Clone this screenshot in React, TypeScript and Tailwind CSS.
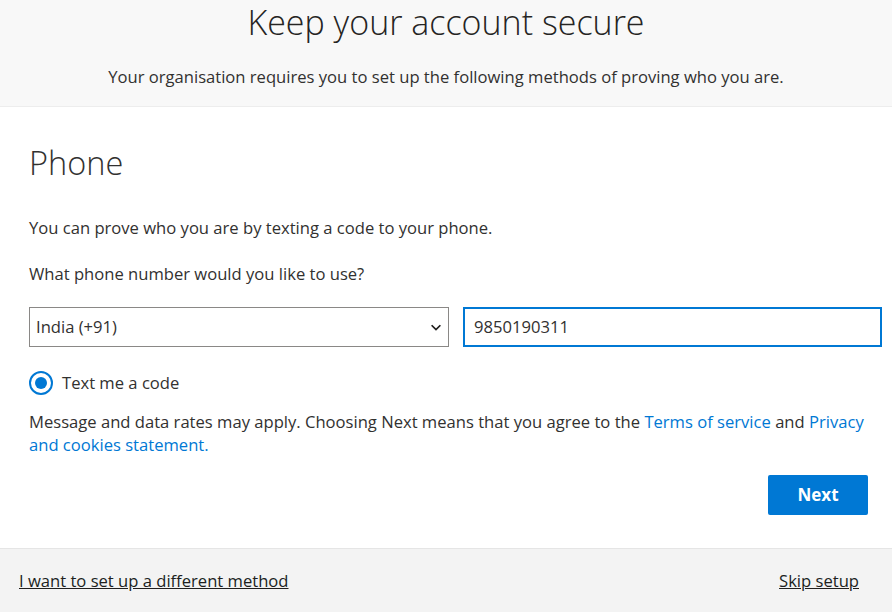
import React from "react";

export default function App() {
  return (
    <div className="w-[892px] h-[612px] flex flex-col bg-white text-[#323130] overflow-hidden" style={{ fontFamily: '"Segoe UI", "Open Sans", sans-serif' }}>
      <header className="h-[107px] bg-[#f8f8f8] border-b border-[#ededed] flex flex-col items-center shrink-0">
        <h1 className="text-[34px] font-light leading-[44px] mt-0 text-[#252423]">Keep your account secure</h1>
        <p className="text-[16.6px] leading-[22px] mt-[22px] text-[#323130]">Your organisation requires you to set up the following methods of proving who you are.</p>
      </header>
      <main className="flex-1 flex flex-col pl-[29px] pr-[10px] pt-[36px]">
        <h2 className="text-[32.5px] font-light leading-[40px] text-[#323130]">Phone</h2>
        <p className="text-[16.6px] leading-[22px] mt-[34px]">You can prove who you are by texting a code to your phone.</p>
        <p className="text-[16.6px] leading-[22px] mt-[24px]">What phone number would you like to use?</p>
        <div className="flex gap-[14px] mt-[22px]">
          <div className="w-[420px] h-[40px] border border-[#8a8886] flex items-center justify-between pl-[6px] pr-[4px] shrink-0">
            <span className="text-[16.6px]">India (+91)</span>
            <svg width="14" height="14" viewBox="0 0 16 16" className="mr-[1px]"><path d="M3 6 L8 11 L13 6" fill="none" stroke="#201f1e" strokeWidth="2" /></svg>
          </div>
          <div className="w-[419px] h-[40px] border-2 border-[#0078d4] flex items-center pl-[9px] shrink-0">
            <span className="text-[16.6px]">9850190311</span>
          </div>
        </div>
        <div className="flex items-center mt-[24px] h-[24px]">
          <span className="w-[24px] h-[24px] rounded-full border-2 border-[#0078d4] flex items-center justify-center shrink-0">
            <span className="w-[12px] h-[12px] rounded-full bg-[#0078d4]" />
          </span>
          <span className="text-[16.6px] ml-[9px]">Text me a code</span>
        </div>
        <p className="text-[16.6px] leading-[23px] mt-[15px] pr-[1px]">
          Message and data rates may apply. Choosing Next means that you agree to the <span className="text-[#0078d4]">Terms of service</span> and <span className="text-[#0078d4]">Privacy and cookies statement.</span>
        </p>
        <div className="flex justify-end mt-[19px] pr-[14px]">
          <button className="w-[100px] h-[40px] bg-[#0078d4] text-white font-bold text-[17px] rounded-[2px]">Next</button>
        </div>
      </main>
      <footer className="h-[64px] bg-[#f3f3f3] border-t border-[#e5e5e5] flex items-center justify-between px-[19px] pt-[1px] shrink-0">
        <span className="text-[16.6px] underline text-[#201f1e]">I want to set up a different method</span>
        <span className="text-[16.6px] underline text-[#201f1e] mr-[14px]">Skip setup</span>
      </footer>
    </div>
  );
}
